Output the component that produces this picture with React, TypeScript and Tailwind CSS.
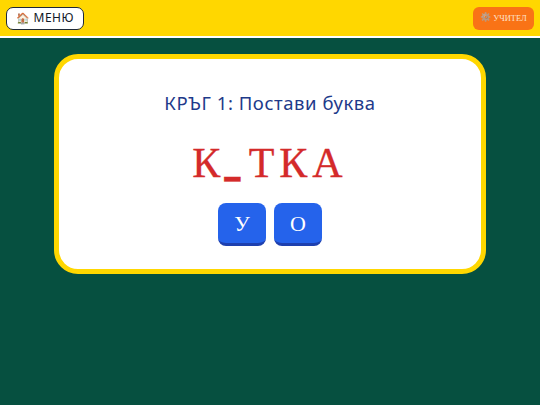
export default function App() {
  return (
    <div className="min-h-[405px] bg-[#065040] flex flex-col items-center">
      <header className="w-full h-[38px] bg-[#ffd700] border-b-[2px] border-white flex items-center justify-between px-[6px]">
        <button className="h-[23px] w-[78px] bg-white border-[1.5px] border-[#1f2937] rounded-[7px] flex items-center justify-center gap-[3px] text-[12px] tracking-[0.45px] text-[#111827] font-['Noto_Sans',sans-serif]">
          <span className="text-[11px]">🏠</span>
          <span>МЕНЮ</span>
        </button>
        <button className="h-[23px] w-[61px] bg-[#f97316] rounded-[6px] flex items-center justify-center gap-[2px] text-[8.5px] text-[#fde2cc] font-['Liberation_Serif',serif]">
          <span className="text-[9px] opacity-70 grayscale">⚙️</span>
          <span>УЧИТЕЛ</span>
        </button>
      </header>
      <main className="mt-[16px] w-[432px] h-[220px] bg-white border-[5px] border-[#ffd700] rounded-[24px] flex flex-col items-center">
        <h1 className="mt-[32px] text-[18.5px] leading-[24px] tracking-[0.55px] text-[#1e3a8a] font-['Noto_Sans',sans-serif]">КРЪГ 1: Постави буква</h1>
        <div className="mt-[22px] h-[52px] flex items-center text-[42px] leading-[52px] tracking-[5px] text-[#d42a2a] [-webkit-text-stroke:0.3px_#d42a2a] font-['Liberation_Serif',serif]">
          <span>К</span>
          <span className="mr-[7px] font-black text-[33px] tracking-normal font-['Inter',sans-serif] relative top-[2px] left-[-1px]">_</span>
          <span>ТКА</span>
        </div>
        <div className="mt-[14px] flex gap-[8px]">
          <button className="w-[48px] h-[43px] bg-[#2563eb] border-b-[3px] border-[#1e40af] rounded-[8px] text-white text-[22px] font-['Liberation_Serif',serif]">У</button>
          <button className="w-[48px] h-[43px] bg-[#2563eb] border-b-[3px] border-[#1e40af] rounded-[8px] text-white text-[22px] font-['Liberation_Serif',serif]">О</button>
        </div>
      </main>
    </div>
  );
}
